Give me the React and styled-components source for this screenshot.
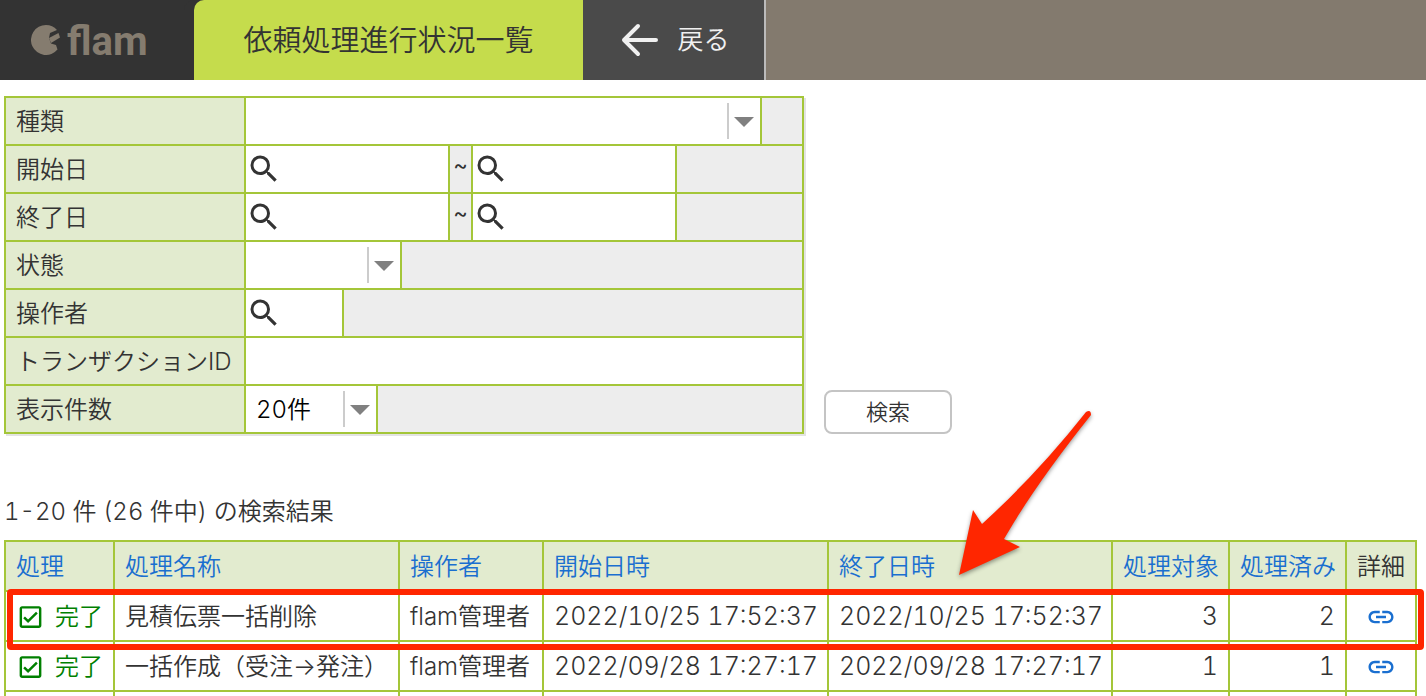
import React, { useState } from 'react';
import styled, { createGlobalStyle } from 'styled-components';
import { MdSearch, MdLink, MdOutlineCheckBox } from 'react-icons/md';

const colors = {
  line: '#a4c639',
  label: '#e2ebcf',
  blank: '#ededed',
  text: '#333333',
  link: '#1a6fd0',
  done: '#008000',
  mark: '#ff2600',
};

const GlobalStyle = createGlobalStyle`
  * { box-sizing: border-box; }
  body {
    margin: 0;
    background: #fff;
    color: ${colors.text};
    font-family: Inter, "Noto Sans CJK JP", sans-serif;
    font-size: 24px;
    font-weight: 350;
    line-height: 36px;
  }
`;

const rows = [
  { id: 1, name: '見積伝票一括削除', user: 'flam管理者', start: '2022/10/25 17:52:37', end: '2022/10/25 17:52:37', target: 3, finished: 2 },
  { id: 2, name: '一括作成（受注→発注）', user: 'flam管理者', start: '2022/09/28 17:27:17', end: '2022/09/28 17:27:17', target: 1, finished: 1 },
];

const columnWidths = [109, 285, 144, 285, 284, 117, 117, 70];
const sortable = ['処理', '処理名称', '操作者', '開始日時', '終了日時', '処理対象', '処理済み'];

const SearchBox = ({ label, width }) => (
  <LookupBox $width={width}>
    <LookupButton type="button" aria-label={`${label}を検索`}><MdSearch size={36} /></LookupButton>
    <TextInput aria-label={label} />
  </LookupBox>
);

const DropDown = ({ id, width, options }) => (
  <SelectBox $width={width}>
    <Select id={id}>
      {options.map((o) => <option key={o}>{o}</option>)}
    </Select>
    <Divider />
    <Caret />
  </SelectBox>
);

const DateRange = ({ label }) => (
  <>
    <SearchBox label={`${label} から`} width={204} />
    <Tilde>~</Tilde>
    <SearchBox label={`${label} まで`} width={204} />
  </>
);

const App = () => {
  const [transactionId, setTransactionId] = useState('');

  return (
    <Page>
      <GlobalStyle />
      <Header>
        <Logo href="#">
          <LogoMark viewBox="0 0 30 30" aria-hidden="true">
            <path d="M15 0A15 15 0 1 0 26.500 24.600L25 20L20 18.500L18 13L19 8L26 5A15 15 0 0 0 15 0Z" />
            <path d="M18 13L27.500 8L29 12.500L20 18Z" />
          </LogoMark>
          <LogoText>flam</LogoText>
        </Logo>
        <Title>依頼処理進行状況一覧</Title>
        <BackButton type="button">
          <svg width="38" height="34" viewBox="0 0 38 34" fill="none" stroke="currentColor" strokeWidth="4" strokeLinecap="round" strokeLinejoin="round">
            <path d="M35 17H3M17 3L3 17L17 31" />
          </svg>
          戻る
        </BackButton>
      </Header>

      <Main>
        <SearchForm onSubmit={(e) => e.preventDefault()}>
          <Fields>
            <Field>
              <Label htmlFor="kind">種類</Label>
              <DropDown id="kind" width={516} options={['']} />
            </Field>
            <Field>
              <Label as="span">開始日</Label>
              <DateRange label="開始日" />
            </Field>
            <Field>
              <Label as="span">終了日</Label>
              <DateRange label="終了日" />
            </Field>
            <Field>
              <Label htmlFor="state">状態</Label>
              <DropDown id="state" width={156} options={['']} />
            </Field>
            <Field>
              <Label as="span">操作者</Label>
              <SearchBox label="操作者" width={98} />
            </Field>
            <Field>
              <Label htmlFor="transaction">トランザクションID</Label>
              <WideInput id="transaction" value={transactionId} onChange={(e) => setTransactionId(e.target.value)} />
            </Field>
            <Field>
              <Label htmlFor="count">表示件数</Label>
              <DropDown id="count" width={132} options={['20件', '50件']} />
            </Field>
          </Fields>
          <SubmitButton type="submit">検索</SubmitButton>
        </SearchForm>

        <Summary>1-20 件 (26 件中) の検索結果</Summary>

        <Results>
          <Table>
            <colgroup>
              {columnWidths.map((w, i) => <Col key={i} $width={w} />)}
            </colgroup>
            <thead>
              <tr>
                {sortable.map((h) => <Th key={h}><SortLink href="#">{h}</SortLink></Th>)}
                <Th>詳細</Th>
              </tr>
            </thead>
            <tbody>
              {rows.map((r) => (
                <tr key={r.id}>
                  <Td><Status><MdOutlineCheckBox size={30} />完了</Status></Td>
                  <Td>{r.name}</Td>
                  <Td>{r.user}</Td>
                  <Td><Num>{r.start}</Num></Td>
                  <Td><Num>{r.end}</Num></Td>
                  <Td $align="right"><Num>{r.target}</Num></Td>
                  <Td $align="right"><Num>{r.finished}</Num></Td>
                  <Td $align="center"><DetailLink href="#" aria-label="詳細"><MdLink size={30} /></DetailLink></Td>
                </tr>
              ))}
              <tr>
                {columnWidths.map((w, i) => <Td key={i} />)}
              </tr>
            </tbody>
          </Table>
          <RowMark />
          <Arrow viewBox="0 0 140 170" aria-hidden="true">
            <path d="M4 168L18 103L27 117Q83 66 131 5Q136 2 136 8Q80 78 49 132L65 140Z" />
          </Arrow>
        </Results>
      </Main>
    </Page>
  );
};

export default App;


const Page = styled.div`
  display: flex;
  flex-direction: column;
  height: 100vh;
`;

const Header = styled.header`
  display: flex;
  flex: none;
  height: 80px;
  background: #837a6e;
`;

const Logo = styled.a`
  display: flex;
  align-items: center;
  gap: 6px;
  width: 194px;
  padding-left: 31px;
  background: #333;
  color: #857c6f;
  text-decoration: none;
`;

const LogoMark = styled.svg`
  width: 30px;
  height: 30px;
  fill: currentColor;
`;

const LogoText = styled.span`
  padding-top: 4px;
  font: 700 40px/48px Roboto, sans-serif;
`;

const Title = styled.h1`
  display: flex;
  align-items: center;
  justify-content: center;
  width: 389px;
  margin: 0;
  padding-top: 2px;
  border-top-left-radius: 10px;
  background: #c5dc4c;
  box-shadow: -10px 0 0 #333;
  font-size: 29px;
  font-weight: inherit;
`;

const BackButton = styled.button`
  display: flex;
  align-items: center;
  justify-content: center;
  gap: 18px;
  width: 183px;
  border: 0;
  border-right: 2px solid #bbb;
  padding: 0 0 0 4px;
  background: #4a4a4a;
  color: #f0f0f0;
  font: inherit;
  font-size: 26px;
`;

const Main = styled.main`
  flex: 1;
  min-height: 0;
  padding: 16px 9px 0 4px;
  overflow: hidden;
`;

const SearchForm = styled.form`
  display: flex;
  align-items: flex-end;
  gap: 20px;
`;

const Fields = styled.div`
  width: 800px;
  border: 2px solid ${colors.line};
  background: ${colors.blank};
  box-shadow: 2px 2px 0 #e3e3e3;
`;

const Field = styled.div`
  display: flex;
  height: 48px;

  & + & {
    border-top: 2px solid ${colors.line};
  }

  &:first-child {
    height: 46px;
  }
`;

const Label = styled.label`
  display: flex;
  align-items: center;
  width: 240px;
  padding: 2px 0 0 10px;
  border-right: 2px solid ${colors.line};
  background: ${colors.label};
`;

const LookupBox = styled.div`
  display: flex;
  align-items: center;
  width: ${(props) => props.$width}px;
  border-right: 2px solid ${colors.line};
  background: #fff;
`;

const LookupButton = styled.button`
  display: flex;
  border: 0;
  padding: 0;
  background: none;
  color: ${colors.text};
`;

const TextInput = styled.input`
  flex: 1;
  min-width: 0;
  height: 100%;
  border: 0;
  background: none;
  font: inherit;
`;

const WideInput = styled(TextInput)`
  padding: 0 10px;
  background: #fff;
`;

const Tilde = styled.span`
  width: 23px;
  border-right: 2px solid ${colors.line};
  text-align: center;
  font-size: 22px;
  font-weight: 400;
  line-height: 38px;
`;

const SelectBox = styled.div`
  position: relative;
  width: ${(props) => props.$width}px;
  border-right: 2px solid ${colors.line};
  background: #fff;
`;

const Select = styled.select`
  appearance: none;
  width: 100%;
  height: 100%;
  border: 0;
  padding: 2px 36px 0 10px;
  background: none;
  color: #000;
  font: inherit;
  font-variant-numeric: tabular-nums;
`;

const Divider = styled.span`
  position: absolute;
  top: 5px;
  right: 31px;
  width: 2px;
  height: 36px;
  background: #ccc;
  pointer-events: none;
`;

const Caret = styled.span`
  position: absolute;
  top: 19px;
  right: 6px;
  border: 10px solid transparent;
  border-top-color: #808080;
  border-bottom: 0;
  pointer-events: none;
`;

const SubmitButton = styled.button`
  width: 128px;
  height: 44px;
  border: 2px solid #c4c4c4;
  border-radius: 8px;
  padding: 0;
  background: #fff;
  color: ${colors.text};
  font: inherit;
  font-size: 22px;
`;

const Summary = styled.p`
  margin: 60px 0 10px;
  font-variant-numeric: tabular-nums;
`;

const Num = styled.span`
  font-size: 25px;
  font-variant-numeric: tabular-nums;
  line-height: 1;
`;

const Results = styled.div`
  position: relative;
`;

const Table = styled.table`
  width: 100%;
  table-layout: fixed;
  border-collapse: collapse;
`;

const Col = styled.col`
  width: ${(props) => props.$width}px;
`;

const Th = styled.th`
  height: 50px;
  padding: 2px 10px 0;
  border: 2px solid ${colors.line};
  background: ${colors.label};
  font-weight: inherit;
  text-align: left;
  white-space: nowrap;
`;

const Td = styled.td`
  height: 50px;
  padding: 2px 10px 0;
  border: 2px solid ${colors.line};
  text-align: ${(props) => props.$align || 'left'};
  white-space: nowrap;
`;

const SortLink = styled.a`
  color: ${colors.link};
  text-decoration: none;
`;

const Status = styled.span`
  display: flex;
  align-items: center;
  gap: 10px;
  color: ${colors.done};
`;

const DetailLink = styled.a`
  display: flex;
  justify-content: center;
  color: ${colors.link};
`;

// highlight over the first result
const RowMark = styled.div`
  position: absolute;
  top: 49px;
  left: 3px;
  right: -7px;
  height: 61px;
  border: 6px solid ${colors.mark};
  border-radius: 4px;
  pointer-events: none;
`;

const Arrow = styled.svg`
  position: absolute;
  top: -133px;
  left: 955px;
  width: 140px;
  height: 170px;
  margin-left: -4px;
  fill: ${colors.mark};
  filter: drop-shadow(0 2px 2px rgba(0, 0, 0, 0.4));
  pointer-events: none;
`;
